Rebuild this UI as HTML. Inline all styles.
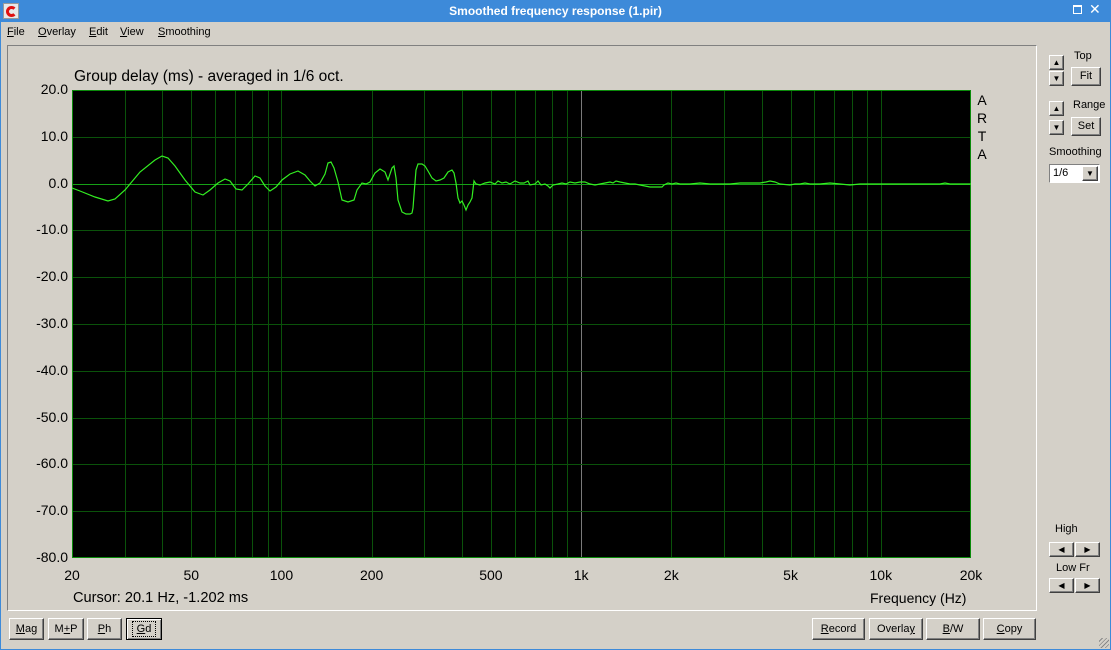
<!DOCTYPE html>
<html><head><meta charset="utf-8"><style>
*{margin:0;padding:0;box-sizing:border-box}
body{width:1111px;height:650px;background:#d4d0c8;font-family:"Liberation Sans","DejaVu Sans",sans-serif;position:relative;overflow:hidden}
.abs{position:absolute}
#title{left:0;top:0;width:1111px;height:22px;background:#3d8ad9;color:#fff;font-weight:bold;font-size:12px;text-align:center;line-height:23px}
#frameL{left:0;top:22px;width:1px;height:628px;background:#3d8ad9}
#frameR{right:0;top:22px;width:1px;height:628px;background:#3d8ad9}
#frameB{left:0;bottom:0;width:1111px;height:1px;background:#3d8ad9}
.menu{top:26px;font-size:11px;color:#000}
.menu u{text-decoration:underline}
#panel{left:7px;top:45px;width:1030px;height:566px;border-top:1px solid #808080;border-left:1px solid #808080;border-right:1px solid #fff;border-bottom:1px solid #fff}
.btn{position:absolute;background:#d4d0c8;border-top:1px solid #fff;border-left:1px solid #fff;border-right:1px solid #404040;border-bottom:1px solid #404040;box-shadow:inset -1px -1px 0 #808080;font-size:11px;text-align:center;color:#000}
.lbl{position:absolute;font-size:11px;color:#000}
.ax{position:absolute;font-size:14px;color:#000}
</style></head><body>
<div id="title" class="abs">Smoothed frequency response (1.pir)</div>
<div class="abs" style="left:3px;top:3px;width:16px;height:16px;background:#e8e8e8;border:1px solid #999"><div style="position:absolute;left:2px;top:2px;width:11px;height:11px;border-radius:50%;border:3px solid #e01010;border-right-color:transparent"></div></div>
<div class="abs" style="left:1073px;top:5px;width:9px;height:9px;border:1px solid #fff;border-top-width:2px"></div>
<div class="abs" style="left:1089px;top:1px;color:#fff;font-size:14px;font-weight:bold">✕</div>
<div id="frameL" class="abs"></div><div id="frameR" class="abs"></div><div id="frameB" class="abs"></div>
<div class="abs menu" style="left:7px"><u>F</u>ile</div>
<div class="abs menu" style="left:38px"><u>O</u>verlay</div>
<div class="abs menu" style="left:89px"><u>E</u>dit</div>
<div class="abs menu" style="left:120px"><u>V</u>iew</div>
<div class="abs menu" style="left:158px"><u>S</u>moothing</div>
<div id="panel" class="abs"></div>
<svg class="abs" style="left:0;top:0" width="1111" height="650" id="svg">
<rect x="72" y="90" width="899" height="468" fill="#000"/>
<g id="grid" shape-rendering="crispEdges"></g>
<rect x="72.5" y="90.5" width="898" height="467" fill="none" stroke="#0a8a0a" shape-rendering="crispEdges"/>
<polyline id="curve" fill="none" stroke="#33ee22" stroke-width="1.2"/>
</svg>
<div class="ax" style="left:74px;top:68px;font-size:15.5px">Group delay (ms) - averaged in 1/6 oct.</div>
<div id="ylab"></div>
<div id="xlab"></div>
<div class="ax" style="left:976px;top:91px;line-height:18px;width:12px;text-align:center">A<br>R<br>T<br>A</div>
<div class="ax" style="left:73px;top:590px;font-size:14.6px">Cursor: 20.1 Hz, -1.202 ms</div>
<div class="ax" style="left:870px;top:590px">Frequency (Hz)</div>

<div class="btn" style="left:9px;top:618px;width:35px;height:22px;line-height:20px"><u>M</u>ag</div>
<div class="btn" style="left:48px;top:618px;width:36px;height:22px;line-height:20px">M<u>+</u>P</div>
<div class="btn" style="left:87px;top:618px;width:35px;height:22px;line-height:20px"><u>P</u>h</div>
<div class="btn" style="left:126px;top:618px;width:36px;height:22px;line-height:20px;border:1px solid #000;box-shadow:inset 1px 1px 0 #fff,inset -1px -1px 0 #808080"><span style="outline:1px dotted #000;padding:1px 4px"><u>G</u>d</span></div>
<div class="btn" style="left:812px;top:618px;width:53px;height:22px;line-height:20px"><u>R</u>ecord</div>
<div class="btn" style="left:869px;top:618px;width:54px;height:22px;line-height:20px">Overla<u>y</u></div>
<div class="btn" style="left:926px;top:618px;width:54px;height:22px;line-height:20px"><u>B</u>/W</div>
<div class="btn" style="left:983px;top:618px;width:53px;height:22px;line-height:20px"><u>C</u>opy</div>

<div class="lbl" style="left:1074px;top:50px">Top</div>
<div class="btn" style="left:1049px;top:55px;width:15px;height:15px;line-height:13px;font-size:8px">▲</div>
<div class="btn" style="left:1049px;top:71px;width:15px;height:15px;line-height:13px;font-size:8px">▼</div>
<div class="btn" style="left:1071px;top:67px;width:30px;height:19px;line-height:17px">Fit</div>
<div class="lbl" style="left:1073px;top:99px">Range</div>
<div class="btn" style="left:1049px;top:101px;width:15px;height:15px;line-height:13px;font-size:8px">▲</div>
<div class="btn" style="left:1049px;top:120px;width:15px;height:15px;line-height:13px;font-size:8px">▼</div>
<div class="btn" style="left:1071px;top:117px;width:30px;height:19px;line-height:17px">Set</div>
<div class="lbl" style="left:1049px;top:146px">Smoothing</div>
<div class="abs" style="left:1049px;top:164px;width:51px;height:19px;background:#fff;border-top:1px solid #808080;border-left:1px solid #808080;border-right:1px solid #fff;border-bottom:1px solid #fff;font-size:11px;padding:2px 0 0 3px">1/6</div>
<div class="btn" style="left:1082px;top:166px;width:16px;height:15px;line-height:13px;font-size:8px">▼</div>
<div class="lbl" style="left:1055px;top:523px">High</div>
<div class="btn" style="left:1049px;top:542px;width:25px;height:15px;line-height:13px;font-size:8px">◀</div>
<div class="btn" style="left:1075px;top:542px;width:25px;height:15px;line-height:13px;font-size:8px">▶</div>
<div class="lbl" style="left:1056px;top:562px">Low Fr</div>
<div class="btn" style="left:1049px;top:578px;width:25px;height:15px;line-height:13px;font-size:8px">◀</div>
<div class="btn" style="left:1075px;top:578px;width:25px;height:15px;line-height:13px;font-size:8px">▶</div>
<div class="abs" style="right:2px;bottom:2px;width:10px;height:10px;background:repeating-linear-gradient(135deg,transparent 0 2px,#888 2px 3px)"></div>

<script>
var ns="http://www.w3.org/2000/svg",g=document.getElementById('grid');
function X(f){return 72+299.67*Math.log10(f/20);}
function line(x1,y1,x2,y2,c){var l=document.createElementNS(ns,'line');l.setAttribute('x1',x1);l.setAttribute('y1',y1);l.setAttribute('x2',x2);l.setAttribute('y2',y2);l.setAttribute('stroke',c);l.setAttribute('stroke-width',1);g.appendChild(l);}
var fs=[];for(var d=10;d<=10000;d*=10)for(var k=1;k<10;k++){var f=k*d;if(f>20&&f<20000)fs.push(f);}
fs.forEach(function(f){var x=Math.round(X(f))+0.5;line(x,90,x,558,f==1000?'#7a7a7a':'#0a520a');});
for(var i=1;i<10;i++){var y=Math.round(90+i*46.8)+0.5;line(72,y,971,y,i==2?'#16a016':'#0a520a');}
var yl='';for(var i=0;i<=10;i++){var v=20-i*10;yl+='<div class="ax" style="left:10px;width:58px;text-align:right;top:'+(90+i*46.8-9)+'px">'+v.toFixed(1)+'</div>';}
document.getElementById('ylab').innerHTML=yl;
var xs=[[20,'20'],[50,'50'],[100,'100'],[200,'200'],[500,'500'],[1000,'1k'],[2000,'2k'],[5000,'5k'],[10000,'10k'],[20000,'20k']],xl='';
xs.forEach(function(a){xl+='<div class="ax" style="left:'+(X(a[0])-30)+'px;width:60px;text-align:center;top:567px">'+a[1]+'</div>';});
document.getElementById('xlab').innerHTML=xl;
var p=[[72,188],[80,191],[95,197],[108,201],[115,199],[125,190],[140,172],[155,160],[162,156],[168,158],[175,166],[185,180],[195,192],[203,195],[210,190],[218,183],[225,179],[230,181],[236,189],[242,190],[248,184],[255,176],[260,178],[265,186],[270,191],[276,187],[282,180],[290,174],[298,171],[305,175],[310,181],[315,186],[320,183],[325,174],[328,163],[331,162],[334,168],[338,182],[342,200],[348,202],[354,200],[357,190],[362,183],[366,184],[370,182],[375,173],[380,169],[385,172],[388,180],[392,168],[394,166],[396,178],[398,200],[402,212],[406,214],[410,214],[412,213],[413,208],[414,195],[416,170],[418,164],[422,164],[425,166],[428,171],[432,178],[436,181],[440,180],[444,178],[448,172],[452,170],[454,173],[456,183],[458,198],[460,203],[462,201],[464,205],[466,210],[468,205],[470,202],[472,198],[474,181],[476,184],[480,185],[485,183],[490,182],[495,184],[498,181],[502,183],[506,182],[510,184],[515,181],[520,183],[524,183],[528,181],[530,185],[535,184],[538,181],[541,185],[545,184],[548,186],[550,188],[553,185],[558,184],[562,183],[566,184],[570,182],[575,183],[580,182],[585,182],[590,184],[595,185],[600,184],[605,183],[610,182],[613,183],[616,181],[620,182],[625,183],[630,184],[635,184],[640,185],[645,186],[650,187],[655,187],[662,187],[664,185],[668,183],[672,184],[676,183],[680,184],[690,184],[700,183],[710,184],[720,184],[730,184],[740,183],[750,183],[760,183],[766,182],[770,181],[775,182],[780,184],[790,185],[795,184],[800,184],[805,183],[810,184],[820,184],[830,183],[840,184],[850,185],[860,184],[870,184],[880,184],[900,184],[920,184],[940,184],[945,183],[950,184],[971,184]];
document.getElementById('curve').setAttribute('points',p.map(function(a){return a.join(',');}).join(' '));
</script>
</body></html>
